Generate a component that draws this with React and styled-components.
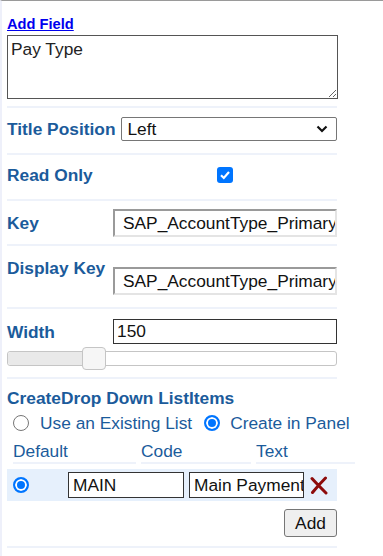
import styled, { createGlobalStyle } from "styled-components";

const GlobalStyle = createGlobalStyle`
  html, body {
    margin: 0;
    padding: 0;
    background: #fff;
  }
  body {
    font-family: "Liberation Sans", Arial, sans-serif;
    font-size: 13pt;
  }
`;

const labelBlue = "#1b5b9b";
const sepColor = "#eef2fa";

const Panel = styled.div`
  width: 383px;
  height: 556px;
  box-sizing: border-box;
  border-top: 1px solid #9a9a9a;
  border-left: 2px solid #eef0fa;
  padding-left: 5px;
  overflow: hidden;
`;

const Row = styled.div`
  width: 330px;
  display: flex;
  flex-direction: ${(p) => (p.$column ? "column" : "row")};
  align-items: ${(p) => p.$align || "center"};
  padding-top: ${(p) => p.$pt}px;
  padding-bottom: ${(p) => p.$pb}px;
  border-bottom: 2px solid ${sepColor};
`;

const Block = styled.div`
  width: 330px;
  padding-top: ${(p) => p.$pt}px;
  padding-bottom: ${(p) => p.$pb}px;
  border-bottom: 2px solid ${sepColor};
`;

const AddLink = styled.a`
  display: block;
  color: #0000ee;
  font-weight: bold;
  font-size: 11pt;
  text-decoration: underline;
  line-height: 17px;
`;

const TitleArea = styled.textarea`
  display: block;
  margin: 2px 0 0;
  width: 331px;
  height: 64px;
  box-sizing: border-box;
  border: 1px solid #555;
  padding: 3px;
  font-family: inherit;
  font-size: 13pt;
  color: #222;
  resize: vertical;
  outline: none;
`;

const Label = styled.span`
  flex: none;
  min-width: 100px;
  margin-right: 6px;
  color: ${labelBlue};
  font-weight: bold;
  line-height: 20px;
`;

const SelectWrap = styled.div`
  position: relative;
  flex: 1;
  height: 24px;
`;

const Select = styled.select`
  appearance: none;
  width: 100%;
  height: 24px;
  box-sizing: border-box;
  border: 1px solid #767676;
  border-radius: 2px;
  background: #fff;
  padding: 0 0 0 5px;
  font-family: inherit;
  font-size: 13pt;
  color: #111;
`;

const Chevron = styled.svg`
  position: absolute;
  right: 9px;
  top: 8px;
  pointer-events: none;
`;

const CheckCell = styled.div`
  flex: 1;
  display: flex;
  justify-content: center;
`;

const CheckBox = styled.span`
  width: 16px;
  height: 16px;
  border-radius: 3px;
  background: #0075ff;
  display: flex;
  align-items: center;
  justify-content: center;
`;

const InsetInput = styled.input`
  flex: 1;
  min-width: 0;
  height: 28px;
  margin-top: ${(p) => p.$mt || 0}px;
  box-sizing: border-box;
  border-style: solid;
  border-width: 2px;
  border-color: #9a9a9a #e4e4e4 #e4e4e4 #9a9a9a;
  padding: 0 0 0 8px;
  font-family: inherit;
  font-size: 13pt;
  color: #111;
  outline: none;
`;

const PlainInput = styled.input`
  flex: ${(p) => (p.$w ? "none" : 1)};
  width: ${(p) => (p.$w ? `${p.$w}px` : "auto")};
  min-width: 0;
  height: ${(p) => p.$h}px;
  box-sizing: border-box;
  border: 1px solid #333;
  padding: 0 0 0 ${(p) => p.$pl}px;
  font-family: inherit;
  font-size: 13pt;
  color: #111;
  background: #fff;
  outline: none;
`;

const WidthLine = styled.div`
  display: flex;
  align-items: center;
`;

const Track = styled.div`
  position: relative;
  margin-top: 7px;
  height: 15px;
  box-sizing: border-box;
  border: 1px solid #c5c5c5;
  border-radius: 3px;
  background: #fff;
`;

const Range = styled.div`
  height: 100%;
  background: #e9e9e9;
  border-radius: 3px 0 0 3px;
`;

const Thumb = styled.span`
  position: absolute;
  top: -5px;
  width: 24px;
  height: 23px;
  margin-left: -12px;
  box-sizing: border-box;
  border: 1px solid #c5c5c5;
  border-radius: 4px;
  background: #f6f6f6;
`;

const SectionTitle = styled.div`
  color: ${labelBlue};
  font-weight: bold;
  line-height: 20px;
`;

const RadioLine = styled.div`
  margin-top: 5px;
  padding-left: 6px;
  display: flex;
  align-items: center;
  line-height: 20px;
  color: ${labelBlue};
`;

const Radio = styled.span`
  flex: none;
  width: 16px;
  height: 16px;
  box-sizing: border-box;
  border-radius: 50%;
  border: ${(p) => (p.$on ? "2px solid #0075ff" : "1px solid #767676")};
  background: ${(p) => (p.$on ? "#0075ff" : "#fff")};
  box-shadow: ${(p) => (p.$on ? "inset 0 0 0 2px #fff" : "none")};
  margin-right: ${(p) => p.$mr || 0}px;
`;

const RadioText = styled.span`
  margin-right: ${(p) => p.$mr || 0}px;
  white-space: nowrap;
`;

const HeadRow = styled.div`
  margin-top: 8px;
  padding-left: 6px;
  display: flex;
  gap: 5px;
`;

const HeadCell = styled.div`
  flex: none;
  width: ${(p) => p.$w}px;
  color: ${labelBlue};
  line-height: 20px;
  padding-bottom: 1px;
  border-bottom: 2px solid ${sepColor};
`;

const ItemRow = styled.div`
  margin-top: 5px;
  height: 32px;
  background: #e6f0fc;
  display: flex;
  align-items: center;
  padding-left: 6px;
`;

const RadioCell = styled.div`
  flex: none;
  width: 55px;
  display: flex;
`;

const DeleteIcon = styled.svg`
  flex: none;
  margin-left: 6px;
`;

const ButtonLine = styled.div`
  margin-top: 8px;
  display: flex;
  justify-content: flex-end;
`;

const Button = styled.button`
  height: 28px;
  width: 53px;
  box-sizing: border-box;
  border: 1px solid #767676;
  border-radius: 3px;
  background: #efefef;
  font-family: inherit;
  font-size: 13pt;
  color: #111;
  padding: 0;
`;

const sliderValue = 150;
const sliderMax = 570;

export default function App() {
  const pct = (sliderValue / sliderMax) * 100;
  return (
    <>
      <GlobalStyle />
      <Panel>
        <Block $pt={15} $pb={7}>
          <AddLink href="#">Add Field</AddLink>
          <TitleArea defaultValue="Pay Type" />
        </Block>

        <Row $pt={9} $pb={12}>
          <Label>Title Position</Label>
          <SelectWrap>
            <Select defaultValue="Left">
              <option>Left</option>
              <option>Top</option>
              <option>Right</option>
            </Select>
            <Chevron width="12" height="8" viewBox="0 0 12 8">
              <path d="M1.5 1.5 L6 6 L10.5 1.5" fill="none" stroke="#111" strokeWidth="2.2" />
            </Chevron>
          </SelectWrap>
        </Row>

        <Row $pt={10} $pb={14}>
          <Label>Read Only</Label>
          <CheckCell>
            <CheckBox>
              <svg width="12" height="12" viewBox="0 0 12 12">
                <path d="M2 6.3 L4.8 9 L10 3" fill="none" stroke="#fff" strokeWidth="2.2" />
              </svg>
            </CheckBox>
          </CheckCell>
        </Row>

        <Row $pt={8} $pb={7}>
          <Label>Key</Label>
          <InsetInput defaultValue="SAP_AccountType_PrimaryAccount" />
        </Row>

        <Row $pt={12} $pb={12} $align="flex-start">
          <Label>Display Key</Label>
          <InsetInput $mt={9} defaultValue="SAP_AccountType_PrimaryAccount" />
        </Row>

        <Block $pt={10} $pb={11}>
          <WidthLine>
            <Label>Width</Label>
            <PlainInput $h={25} $pl={3} defaultValue="150" />
          </WidthLine>
          <Track>
            <Range style={{ width: `${pct}%` }} />
            <Thumb style={{ left: `${pct}%` }} />
          </Track>
        </Block>

        <Block $pt={9} $pb={9}>
          <SectionTitle>CreateDrop Down ListItems</SectionTitle>
          <RadioLine>
            <Radio $mr={11} />
            <RadioText $mr={12}>Use an Existing List</RadioText>
            <Radio $on $mr={10} />
            <RadioText>Create in Panel</RadioText>
          </RadioLine>
          <HeadRow>
            <HeadCell $w={123}>Default</HeadCell>
            <HeadCell $w={110}>Code</HeadCell>
            <HeadCell $w={99}>Text</HeadCell>
          </HeadRow>
          <ItemRow>
            <RadioCell>
              <Radio $on />
            </RadioCell>
            <PlainInput $w={116} $h={26} $pl={4} defaultValue="MAIN" />
            <PlainInput
              $w={115}
              $h={26}
              $pl={4}
              style={{ marginLeft: 5 }}
              defaultValue="Main Payment Type"
            />
            <DeleteIcon width="18" height="19" viewBox="0 0 18 19">
              <path
                d="M2 2.5 C6 7 11 12 16 17 M15.5 2 C11 6.5 7 11 2.5 16.5"
                fill="none"
                stroke="#8d0c0c"
                strokeWidth="3"
                strokeLinecap="round"
              />
            </DeleteIcon>
          </ItemRow>
          <ButtonLine>
            <Button>Add</Button>
          </ButtonLine>
        </Block>
      </Panel>
    </>
  );
}
